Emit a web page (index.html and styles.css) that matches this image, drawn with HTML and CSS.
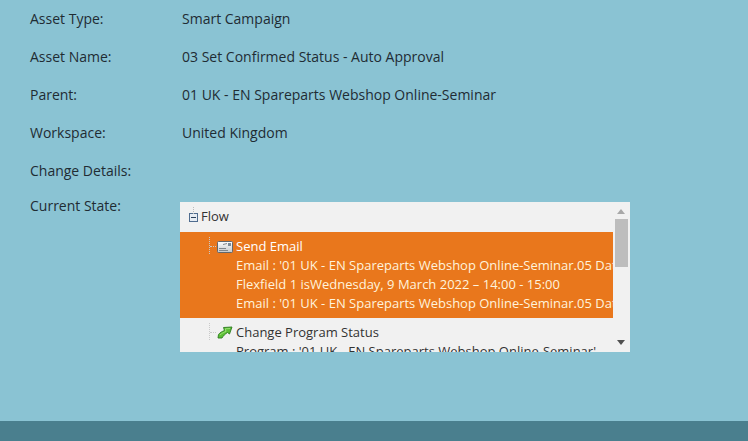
FILE: index.html
```html
<!DOCTYPE html>
<html lang="en">
<head>
  <meta charset="UTF-8" />
  <title>Audit Trail Details</title>
  <link rel="stylesheet" href="styles.css">
</head>
<body>

<div class="details">
  <div class="detail-row"><span class="detail-label">Asset Type:</span><span>Smart Campaign</span></div>
  <div class="detail-row"><span class="detail-label">Asset Name:</span><span>03 Set Confirmed Status - Auto Approval</span></div>
  <div class="detail-row"><span class="detail-label">Parent:</span><span>01 UK - EN Spareparts Webshop Online-Seminar</span></div>
  <div class="detail-row"><span class="detail-label">Workspace:</span><span>United Kingdom</span></div>
  <div class="detail-row"><span class="detail-label">Change Details:</span></div>

  <div class="state-row">
    <span class="detail-label">Current State:</span>
    <div class="tree-panel">
      <div class="tree">
        <div class="tree-root">
          <svg class="expander" width="9" height="9" viewBox="0 0 9 9">
            <rect x="0.5" y="0.5" width="8" height="8" fill="#e6ecf3" stroke="#4f6c8f"/>
            <rect x="2" y="4" width="5" height="1" fill="#2b3f59"/>
          </svg>
          <span class="root-name">Flow</span>
        </div>

        <div class="flow-step selected">
          <div class="step-title">
            <svg class="step-icon" width="16" height="12" viewBox="0 0 16 12">
              <defs>
                <linearGradient id="envelope" x1="0" y1="0" x2="0" y2="1">
                  <stop offset="0" stop-color="#fdfdfd"/>
                  <stop offset="1" stop-color="#c4c8cc"/>
                </linearGradient>
              </defs>
              <rect x="0.5" y="0.5" width="15" height="11" rx="1" fill="url(#envelope)" stroke="#62676c"/>
              <rect x="11" y="2" width="3" height="3" fill="#7d8a96"/>
              <path d="M2 7.5h7M2 9.5h9M6 3.5l4-1" stroke="#80868c" fill="none"/>
            </svg>
            <span>Send Email</span>
          </div>
          <div class="step-line">Email : '01 UK - EN Spareparts Webshop Online-Seminar.05 Data Confirmation'</div>
          <div class="step-line">Flexfield 1 isWednesday, 9 March 2022 – 14:00 - 15:00</div>
          <div class="step-line">Email : '01 UK - EN Spareparts Webshop Online-Seminar.05 Data Confirmation'</div>
        </div>

        <div class="flow-step">
          <div class="step-title">
            <svg class="step-icon" width="16" height="13" viewBox="0 0 16 13">
              <path d="M1 12 L1.5 8.5 C3 6.5 5 5.5 7.5 4.5 L6.5 1.5 L15 1 L12.5 8 L10.5 6.5 C8 8 6.5 9.5 5 12 Z" fill="#5cbf35" stroke="#2c7a20" stroke-width="0.9" stroke-linejoin="round"/>
              <path d="M3 9 C4.5 7.5 6.5 6.5 9 5.5 L8.3 2.8 L13 2.5" fill="none" stroke="#a6e880" stroke-width="0.8"/>
            </svg>
            <span>Change Program Status</span>
          </div>
          <div class="step-line">Program : '01 UK - EN Spareparts Webshop Online-Seminar'</div>
        </div>
      </div>

      <div class="scrollbar">
        <span class="arrow arrow-up"></span>
        <span class="thumb"></span>
        <span class="arrow arrow-down"></span>
      </div>
    </div>
  </div>
</div>

<div class="footer"></div>

</body>
</html>
```

FILE: styles.css
```css
:root {
  --bg-page: #8ac3d3;
  --bg-footer: #4a7f8e;
  --bg-panel: #f1f1f1;
  --orange: #e9771c;
  --text: #1f2c33;
}

html, body {
  height: 100%;
}

body {
  margin: 0;
  display: flex;
  flex-direction: column;
  overflow: hidden;
  background: var(--bg-page);
  color: var(--text);
  font-family: "Open Sans", sans-serif;
  font-size: 14px;
  line-height: 20px;
}

.details {
  flex: 1;
  padding: 9px 0 0 30px;
}

.detail-row {
  display: flex;
  height: 20px;
  margin-bottom: 18px;
}

.detail-label {
  width: 152px;
  flex-shrink: 0;
}

.state-row {
  display: flex;
  margin-top: -3px;
}

.state-row .detail-label {
  width: 150px;
}

.tree-panel {
  display: flex;
  width: 450px;
  height: 150px;
  margin-top: 6px;
  background: var(--bg-panel);
  color: #333;
  font-size: 13px;
  overflow: hidden;
}

.tree {
  width: 433px;
  flex-shrink: 0;
  overflow: hidden;
}

.tree-root {
  position: relative;
  display: flex;
  align-items: center;
  gap: 3px;
  height: 30px;
  padding-left: 9px;
  line-height: 28px;
}

.tree-root::before {
  content: "";
  position: absolute;
  left: 13px;
  top: 5px;
  height: 7px;
  border-left: 1px dotted #bbb;
}

.root-name {
  margin-bottom: 2px;
}

.expander {
  margin-top: 1px;
}

.flow-step {
  position: relative;
  padding: 5px 0 5px 56px;
  line-height: 19px;
  white-space: nowrap;
  overflow: hidden;
}

.flow-step.selected {
  height: 76px;
  background: var(--orange);
  color: #fff;
}

.flow-step::before {
  content: "";
  position: absolute;
  left: 29px;
  top: 5px;
  height: 17px;
  border-left: 1px dotted #c9c9c9;
}

.step-title {
  position: relative;
  display: flex;
  align-items: center;
  gap: 3px;
  margin-left: -19px;
}

.step-title::before {
  content: "";
  position: absolute;
  left: -7px;
  top: 9px;
  width: 6px;
  border-top: 1px dotted #c9c9c9;
}

.step-icon {
  flex-shrink: 0;
}

.selected .step-line {
  color: #fff3dc;
}

.scrollbar {
  flex: 1;
  position: relative;
  display: flex;
  flex-direction: column;
  align-items: flex-start;
}

.thumb {
  display: block;
  width: 13px;
  height: 48px;
  margin: 17px 0 0 2px;
  background: #bdbdbd;
}

.arrow {
  position: absolute;
  left: 4px;
  width: 0;
  height: 0;
  border-left: 4px solid transparent;
  border-right: 4px solid transparent;
}

.arrow-up {
  top: 7px;
  border-bottom: 5px solid #a8a8a8;
}

.arrow-down {
  bottom: 7px;
  border-top: 5px solid #505050;
}

.footer {
  height: 20px;
  flex-shrink: 0;
  background: var(--bg-footer);
}
```
